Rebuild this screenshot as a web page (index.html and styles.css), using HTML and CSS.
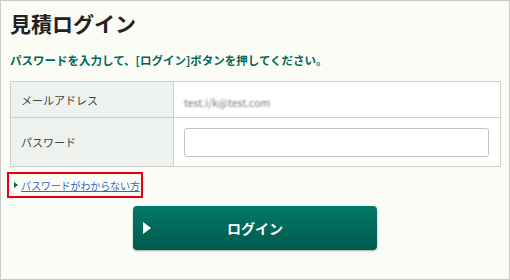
FILE: index.html
```html
<!DOCTYPE html>
<html lang="ja">
<head>
  <meta charset="UTF-8">
  <title>見積ログイン</title>
  <link rel="stylesheet" href="styles.css">
</head>
<body>
  <div class="page">
    <h1>見積ログイン</h1>
    <p class="lead">パスワードを入力して、[ログイン]ボタンを押してください。</p>
    <table class="login-table">
      <tr class="row-mail">
        <th>メールアドレス</th>
        <td><span class="mail">test.i/k@test.com</span></td>
      </tr>
      <tr class="row-pass">
        <th>パスワード</th>
        <td><input type="password" class="pass-input"></td>
      </tr>
    </table>
    <div class="forgot">
      <span class="arrow"></span><a href="#">パスワードがわからない方</a>
    </div>
    <button class="login-button"><span class="play"></span>ログイン</button>
  </div>
</body>
</html>
```

FILE: styles.css
```css
body {
  margin: 0;
  font-family: "Noto Sans CJK JP", "Liberation Sans", sans-serif;
  background-color: #fcfcf7;
}
.page {
  width: 510px;
  height: 280px;
  box-sizing: border-box;
  border: 1px solid #c9c9c9;
  padding: 0 9px;
  background-color: #fcfcf7;
}
h1 {
  margin: 9px 0 0;
  font-size: 21px;
  line-height: 26px;
  font-weight: bold;
  color: #222;
}
.lead {
  margin: 16px 0 0;
  font-size: 11.5px;
  line-height: 16px;
  font-weight: bold;
  color: #006857;
}
.login-table {
  margin-top: 13px;
  width: 491px;
  border-collapse: collapse;
  background-color: #fff;
}
.login-table th,
.login-table td {
  border: 1px solid #cfcfcf;
  padding: 0 10px;
  text-align: left;
}
.login-table th {
  width: 142px;
  background-color: #eef2ee;
  font-size: 11px;
  font-weight: normal;
  color: #444;
}
.row-mail th, .row-mail td {
  height: 35px;
}
.row-pass th, .row-pass td {
  height: 48px;
}
.mail {
  font-size: 10.5px;
  color: transparent;
  text-shadow: 0 0 2px rgba(110, 110, 110, 0.9);
}
.pass-input {
  display: block;
  width: 305px;
  height: 29px;
  box-sizing: border-box;
  border: 1px solid #c4c4c4;
  border-radius: 3px;
  background: #fff;
}
.forgot {
  margin: 5px 0 0 -3px;
  width: 136px;
  height: 26px;
  box-sizing: border-box;
  border: 2px solid #e60012;
  display: flex;
  align-items: center;
  padding-left: 5px;
}
.arrow {
  width: 0;
  height: 0;
  border-left: 4px solid #006857;
  border-top: 3px solid transparent;
  border-bottom: 3px solid transparent;
  margin-right: 3px;
}
.forgot a {
  font-size: 10px;
  color: #3366cc;
  letter-spacing: -0.1px;
}
.login-button {
  position: relative;
  display: block;
  margin: 8px auto 0;
  width: 244px;
  height: 44px;
  border: none;
  border-radius: 4px;
  background: linear-gradient(#007a6a, #005a4b);
  box-shadow: 0 1px 2px rgba(0, 0, 0, 0.35);
  color: #fff;
  font-family: inherit;
  font-size: 14px;
  font-weight: bold;
}
.play {
  position: absolute;
  left: 10px;
  top: 16px;
  width: 0;
  height: 0;
  border-left: 8px solid #fff;
  border-top: 6px solid transparent;
  border-bottom: 6px solid transparent;
}
```
